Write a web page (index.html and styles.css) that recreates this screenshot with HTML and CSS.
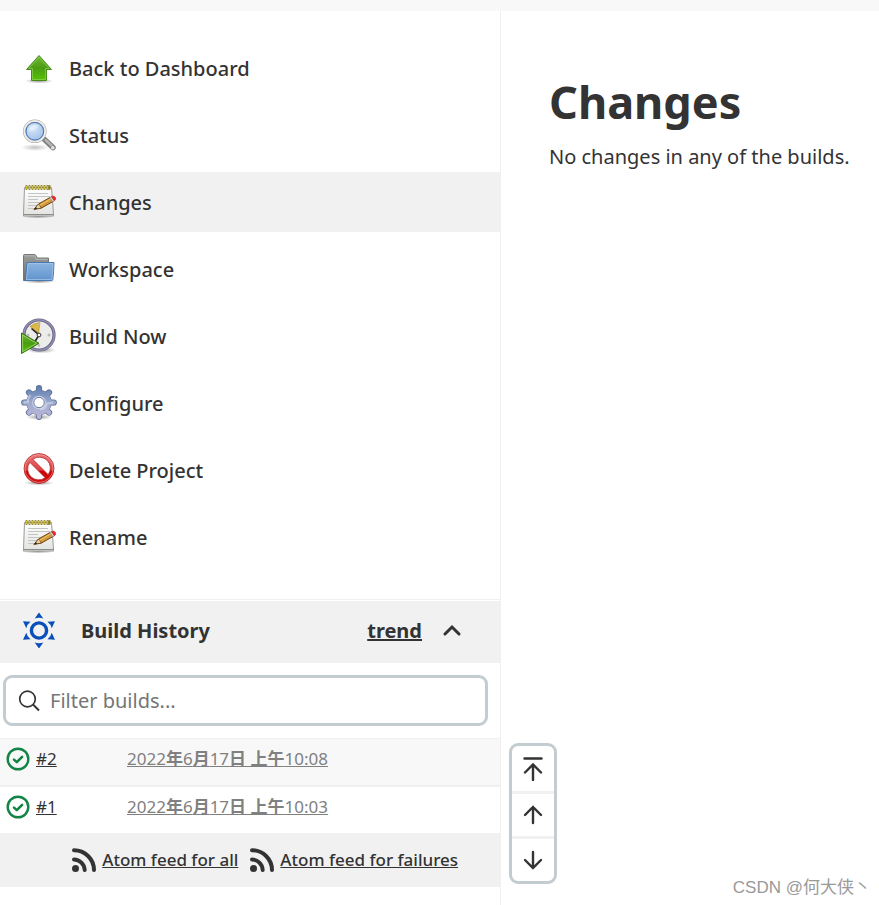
FILE: index.html
```
<!DOCTYPE html>
<html lang="en">
<head>
  <meta charset="UTF-8">
  <meta name="viewport" content="width=device-width, initial-scale=1.0">
  <title>Changes</title>
  <link rel="stylesheet" href="styles.css">
</head>
<body>
  <!-- Shared gradients and icons -->
  <svg class="defs" width="0" height="0" aria-hidden="true">
    <defs>
      <linearGradient id="green" x1="0" y1="0" x2="0" y2="1">
        <stop offset="0" stop-color="#73b83a"/>
        <stop offset="0.5" stop-color="#4a9c12"/>
        <stop offset="1" stop-color="#57c405"/>
      </linearGradient>
      <linearGradient id="blue" x1="0" y1="0" x2="0" y2="1">
        <stop offset="0" stop-color="#8cb4e0"/>
        <stop offset="1" stop-color="#5f94cd"/>
      </linearGradient>
      <radialGradient id="lens" cx="0.4" cy="0.35" r="0.7">
        <stop offset="0" stop-color="#d9e7f8"/>
        <stop offset="1" stop-color="#9abde8"/>
      </radialGradient>
      <linearGradient id="paper" x1="0" y1="0" x2="0" y2="1">
        <stop offset="0" stop-color="#ffffff"/>
        <stop offset="1" stop-color="#e2e2e0"/>
      </linearGradient>
      <linearGradient id="grey" x1="0" y1="0" x2="0" y2="1">
        <stop offset="0" stop-color="#9b9d9a"/>
        <stop offset="1" stop-color="#6c6e6b"/>
      </linearGradient>
      <linearGradient id="steel" gradientUnits="userSpaceOnUse" x1="0" y1="0" x2="0" y2="36">
        <stop offset="0" stop-color="#5878aa"/>
        <stop offset="0.5" stop-color="#9dabd0"/>
        <stop offset="1" stop-color="#c3b8d8"/>
      </linearGradient>
      <linearGradient id="red" x1="0" y1="0" x2="0" y2="1">
        <stop offset="0" stop-color="#ea7c7c"/>
        <stop offset="0.55" stop-color="#dc3f43"/>
        <stop offset="0.6" stop-color="#cc0000"/>
        <stop offset="1" stop-color="#d01818"/>
      </linearGradient>
      <radialGradient id="shadow">
        <stop offset="0" stop-color="#000" stop-opacity="0.4"/>
        <stop offset="1" stop-color="#000" stop-opacity="0"/>
      </radialGradient>
      <symbol id="notepad" viewBox="0 0 36 36">
        <ellipse cx="17" cy="32.5" rx="16" ry="2" fill="url(#shadow)"/>
        <path d="M3.500 3.500h27L32.500 30v2H2.500v-2z" fill="url(#paper)" stroke="#9b9d99"/>
        <path d="M3 30.500h29" stroke="#8b8d89" fill="none"/>
        <path d="M7 9.500h20M7 12.500h22M7 15.500h10M7 18.500h14M7 21.500h9M7 24.500h6" stroke="#c4c5c3" fill="none"/>
        <path d="M5.500 2v3M8.500 2v3M11.500 2v3M14.500 2v3M17.500 2v3M20.500 2v3M23.500 2v3M26.500 2v3M28.500 2v3" stroke="#8f8222" stroke-width="2.200" stroke-linecap="round"/>
        <path d="M5.500 2v3M8.500 2v3M11.500 2v3M14.500 2v3M17.500 2v3M20.500 2v3M23.500 2v3M26.500 2v3" stroke="#cdbd45" stroke-width="1.200"/>
        <path d="M13 25.300l4.500-5.300L29 13.500l3.500 3.700-12 6.800z" fill="#d59a3a" stroke="#6b4312" stroke-width="1"/>
        <path d="M13 25.300l4.500-5.300 3 4z" fill="#ecd3a4" stroke="#6b4312" stroke-width="0.800"/>
        <path d="M13 25.300l2-2.300 1.200 1.700z" fill="#2e2517"/>
        <path d="M18.500 21.300L30 14.700" stroke="#f0c777"/>
        <path d="M28.500 13.800l2-1.200 3.300 3.900-2 1.200z" fill="#d3d7cf" stroke="#777" stroke-width="0.600"/>
        <path d="M30.500 12.600c2.500-1.400 5.200.9 3.700 3.300l-1 .7z" fill="#ef2929" stroke="#c02020" stroke-width="0.700"/>
      </symbol>
      <symbol id="feed" viewBox="0 0 24 24">
        <circle cx="3.500" cy="20.500" r="3.500" fill="currentColor"/>
        <path d="M2 11.500A11 11 0 0 1 12.700 22M2 2.200A20 20 0 0 1 22 22" fill="none" stroke="currentColor" stroke-width="4" stroke-linecap="round"/>
      </symbol>
      <symbol id="success" viewBox="0 0 24 24">
        <circle cx="12" cy="12" r="10.300" fill="none" stroke="#138347" stroke-width="2.400"/>
        <path d="M8 12.600l2.800 2.500 5.300-5.300" fill="none" stroke="#138347" stroke-width="2.600" stroke-linecap="round" stroke-linejoin="round"/>
      </symbol>
    </defs>
  </svg>

  <div class="breadcrumb-bar"></div>
  <div class="page-body">
    <div class="side-panel">
      <nav class="tasks">
        <a class="task" href="#">
          <svg class="task__icon" viewBox="0 0 36 36" aria-hidden="true">
            <ellipse cx="18" cy="31" rx="14" ry="2.500" fill="url(#shadow)"/>
            <path d="M18 5.500L30.500 19.500h-5v11h-15v-11h-5z" fill="url(#green)" stroke="#4a8a1c"/>
            <path d="M18 7.200L28.200 18.500h-3.700v11h-13v-11H7.800z" fill="none" stroke="#8fd257" stroke-opacity="0.700"/>
          </svg>
          <span>Back to Dashboard</span>
        </a>
        <a class="task" href="#">
          <svg class="task__icon" viewBox="0 0 36 36" aria-hidden="true">
            <ellipse cx="14" cy="30.500" rx="14" ry="3.500" fill="url(#shadow)" opacity="0.600"/>
            <path d="M23.500 22.500l8.500 8" stroke="#7f817e" stroke-width="5.500" stroke-linecap="round"/>
            <path d="M24 22.500l7 6.500" stroke="#b4b6b3" stroke-width="2.500"/>
            <circle cx="31.800" cy="30.700" r="1.800" fill="#e4e4e2"/>
            <circle cx="13.800" cy="14.300" r="10.300" fill="url(#lens)" stroke="#a0a2a0" stroke-width="3"/>
            <circle cx="13.800" cy="14.300" r="10.400" fill="none" stroke="#eeeeec" stroke-width="1.800"/>
            <circle cx="13.800" cy="14.300" r="8.800" fill="none" stroke="#4876b5" stroke-width="1"/>
            <path d="M7.500 14a6.500 6.500 0 0 1 10-5.200c-2 4.500-5.500 5-10 5.200z" fill="#fff" opacity="0.400"/>
          </svg>
          <span>Status</span>
        </a>
        <a class="task task--active" href="#">
          <svg class="task__icon" aria-hidden="true"><use href="#notepad"/></svg>
          <span>Changes</span>
        </a>
        <a class="task" href="#">
          <svg class="task__icon" viewBox="0 0 36 36" aria-hidden="true">
            <ellipse cx="18" cy="30.500" rx="17" ry="1.800" fill="url(#shadow)"/>
            <path d="M2.500 29.500V4.500q0-1 1-1h10q1 0 1.400 1l1.200 2.500h11.400v6L10 29.500z" fill="url(#grey)" stroke="#757774"/>
            <path d="M3.500 4.800h10l1.800 3.500h11" fill="none" stroke="#b8bab7"/>
            <path d="M6 11.500h27q-.2 9-1.200 17-.1 1-1.100 1H3.500q1-1 1.200-3z" fill="url(#blue)" stroke="#4a78b0"/>
            <path d="M7 12.500h25q-.3 8-1.200 16H5.500z" fill="none" stroke="#a8c7e8" stroke-opacity="0.700"/>
          </svg>
          <span>Workspace</span>
        </a>
        <a class="task" href="#">
          <svg class="task__icon" viewBox="0 0 36 36" aria-hidden="true">
            <ellipse cx="20" cy="32" rx="15" ry="3.500" fill="url(#shadow)"/>
            <circle cx="18" cy="17" r="15" fill="#ececea" stroke="#6c698c" stroke-width="3.200"/>
            <circle cx="18" cy="17" r="15.200" fill="none" stroke="#9592b2" stroke-width="1.200"/>
            <path d="M9 8.500q4-3.500 10-4l-1.500 10.500z" fill="#dcb846" stroke="#a98d2c" stroke-width="0.600"/>
            <g fill="#b7b9b5"><circle cx="18" cy="6" r="1"/><circle cx="28" cy="17" r="1.500"/><circle cx="18" cy="27.500" r="1.200"/><circle cx="7" cy="17" r="1.500"/></g>
            <path d="M10.500 10.500l7.500 6.500-4 6.500" fill="none" stroke="#222" stroke-width="1.600"/>
            <circle cx="18" cy="17" r="1.900" fill="#fff" stroke="#333"/>
            <path d="M0.500 15L18 25.300L0.500 35.500z" fill="url(#green)" stroke="#37720c"/>
            <path d="M1.600 17L15.700 25.300L1.600 33.600z" fill="none" stroke="#a3da78" stroke-opacity="0.800"/>
          </svg>
          <span>Build Now</span>
        </a>
        <a class="task" href="#">
          <svg class="task__icon" viewBox="0 0 36 36" aria-hidden="true">
            <ellipse cx="18" cy="32" rx="13" ry="3" fill="url(#shadow)"/>
            <g stroke="#5f7098" stroke-width="6.200" stroke-linecap="round">
              <path d="M18 3.200v28.600M3.200 17.500h29.600M8 7.500l20 20M28 7.500l-20 20"/>
              <circle cx="18" cy="17.500" r="9.600" fill="none"/>
            </g>
            <g stroke="url(#steel)" stroke-width="4.600" stroke-linecap="round">
              <path d="M18.010 3.200L18 31.800M3.200 17.500L32.800 17.510M8 7.500l20 20M28 7.500l-20 20"/>
              <circle cx="18" cy="17.500" r="9.300" fill="none" stroke-width="5.800"/>
            </g>
            <circle cx="18" cy="17.500" r="6" fill="#fff" stroke="#d0d6e8" stroke-width="1.600"/>
            <circle cx="18" cy="17.500" r="5.200" fill="#fff" stroke="#66779f"/>
            <path d="M19 24.500q6-.5 7-6l6-1M9.500 10q-3 3-2.500 7l-4 .5" fill="none" stroke="#e5e7f3" opacity="0.500" stroke-width="2"/>
          </svg>
          <span>Configure</span>
        </a>
        <a class="task" href="#">
          <svg class="task__icon" viewBox="0 0 36 36" aria-hidden="true">
            <ellipse cx="18" cy="31" rx="15" ry="2.500" fill="url(#shadow)"/>
            <path fill-rule="evenodd" d="M18 1.500a15 15 0 1 0 0 30a15 15 0 1 0 0-30zM11.800 7.300a11 11 0 0 1 15.400 15.400zM8.800 10.300L24.200 25.700A11 11 0 0 1 8.800 10.300z" fill="url(#red)" stroke="#b52525" stroke-width="0.800"/>
            <circle cx="18" cy="16.500" r="14" fill="none" stroke="#f4a9a9" stroke-width="0.800" opacity="0.700"/>
          </svg>
          <span>Delete Project</span>
        </a>
        <a class="task" href="#">
          <svg class="task__icon" aria-hidden="true"><use href="#notepad"/></svg>
          <span>Rename</span>
        </a>
      </nav>

      <section class="history">
        <div class="history__header">
          <svg class="history__icon" viewBox="0 0 36 36" aria-hidden="true">
            <circle cx="18" cy="18.500" r="7.600" fill="none" stroke="#0b4fba" stroke-width="3.400"/>
            <path d="M18 0.500l4.300 6q-4.300-1.500-8.600 0zM18 36.500l4.300-6q-4.300 1.500-8.600 0zM2 9.300l7.500.5q-3.500 2.600-4.200 6.500zM34 9.300l-7.500.5q3.500 2.600 4.200 6.500zM2 27.700l7.500-.5q-3.500-2.600-4.200-6.500zM34 27.700l-7.500-.5q3.500-2.600 4.200-6.500z" fill="#0b4fba"/>
          </svg>
          <h2 class="history__title">Build History</h2>
          <a class="history__trend" href="#">trend</a>
          <button class="history__collapse" type="button" aria-label="Collapse">
            <svg width="18" height="12" viewBox="0 0 18 12"><path d="M2 10l7-7 7 7" fill="none" stroke="currentColor" stroke-width="3" stroke-linecap="round"/></svg>
          </button>
        </div>

        <label class="search">
          <svg class="search__icon" viewBox="0 0 22 22" aria-hidden="true">
            <circle cx="9.500" cy="9" r="7.800" fill="none" stroke="currentColor" stroke-width="1.700"/>
            <path d="M15 14.500l6 6" stroke="currentColor" stroke-width="1.900"/>
          </svg>
          <input class="search__input" type="text" placeholder="Filter builds..." aria-label="Filter builds">
        </label>

        <div class="builds">
          <table class="builds__table">
            <tr class="build build--alt">
              <td class="build__number"><svg class="build__status" aria-hidden="true"><use href="#success"/></svg><a href="#">#2</a></td>
              <td class="build__date"><a href="#">2022<b>年</b>6<b>月</b>17<b>日 上午</b>10:08</a></td>
            </tr>
            <tr class="build">
              <td class="build__number"><svg class="build__status" aria-hidden="true"><use href="#success"/></svg><a href="#">#1</a></td>
              <td class="build__date"><a href="#">2022<b>年</b>6<b>月</b>17<b>日 上午</b>10:03</a></td>
            </tr>
          </table>

          <div class="build-nav">
            <button class="build-nav__button" type="button" aria-label="Newest builds">
              <svg width="20" height="24" viewBox="0 0 20 24"><path d="M1.500 1.500h17M10 23V8M2 15.500L10 7.500l8 8"/></svg>
            </button>
            <button class="build-nav__button" type="button" aria-label="Newer builds">
              <svg width="20" height="20" viewBox="0 0 20 20"><path d="M10 18V2M2 10L10 2l8 8"/></svg>
            </button>
            <button class="build-nav__button" type="button" aria-label="Older builds">
              <svg width="20" height="20" viewBox="0 0 20 20"><path d="M10 2v16M2 10l8 8 8-8"/></svg>
            </button>
          </div>
        </div>

        <div class="feeds">
          <a class="feed" href="#"><svg class="feed__icon" aria-hidden="true"><use href="#feed"/></svg><span>Atom feed for all</span></a>
          <a class="feed" href="#"><svg class="feed__icon" aria-hidden="true"><use href="#feed"/></svg><span>Atom feed for failures</span></a>
        </div>
      </section>
    </div>

    <main class="main-panel">
      <h1 class="main-panel__title">Changes</h1>
      <p class="main-panel__text">No changes in any of the builds.</p>
    </main>
  </div>
  <div class="watermark">CSDN @何大侠丶</div>
</body>
</html>
```

FILE: styles.css
```
* {
  box-sizing: border-box;
}

body {
  margin: 0;
  min-height: 100vh;
  display: flex;
  flex-direction: column;
  position: relative;
  font-family: "Noto Sans", "Noto Sans CJK SC", sans-serif;
  font-size: 20px;
  color: #333;
  background: #fff;
}

a {
  color: inherit;
}

button {
  padding: 0;
  border: 0;
  background: none;
  color: inherit;
}

svg {
  display: block;
  flex-shrink: 0;
}

.defs {
  position: absolute;
}

.breadcrumb-bar {
  height: 11px;
  background: #f8f8f8;
}

.page-body {
  flex: 1;
  display: flex;
}

.side-panel {
  flex: 0 0 57%;
  border-right: 1px solid #f0f0f0;
}

/* Tasks */
.tasks {
  display: flex;
  flex-direction: column;
  gap: 7px;
  padding: 27px 0 32px;
}

.task {
  display: flex;
  align-items: center;
  gap: 12px;
  height: 60px;
  padding: 0 21px;
  font-weight: 500;
  text-decoration: none;
}

.task--active {
  background: #f1f1f1;
}

.task__icon {
  width: 36px;
  height: 36px;
}

/* Build history */
.history {
  border-top: 1px solid #f0f0f0;
  padding-top: 1px;
}

.history__header {
  display: flex;
  align-items: center;
  height: 62px;
  padding: 0 39px 4px 21px;
  background: #f1f1f1;
}

.history__icon {
  width: 36px;
  height: 36px;
}

.history__title {
  flex: 1;
  margin: 0 0 0 24px;
  font-size: 20px;
  font-weight: 700;
}

.history__trend {
  margin-right: 21px;
  font-weight: 700;
}

.search {
  display: flex;
  align-items: center;
  gap: 10px;
  height: 51px;
  margin: 12px 12px 12px 3px;
  padding: 0 12px;
  border: 3px solid #c3ccd1;
  border-radius: 9px;
}

.search__icon {
  width: 22px;
  height: 22px;
}

.search__input {
  flex: 1;
  min-width: 0;
  padding: 0;
  border: 0;
  outline: 0;
  background: none;
  font: inherit;
}

.search__input::placeholder {
  color: #757575;
}

.builds {
  position: relative;
  border-top: 1px solid #f0f0f0;
}

.builds__table {
  width: 100%;
  table-layout: fixed;
  border-collapse: collapse;
  font-size: 17px;
  line-height: 24px;
}

.build--alt {
  background: #f8f8f8;
  border-bottom: 2px solid #f0f0f0;
}

.build td {
  padding: 8px 0 14px;
}

.build__number {
  width: 127px;
}

.build .build__number {
  padding-left: 6px;
}

.build__status {
  display: inline-block;
  width: 24px;
  height: 24px;
  margin-right: 6px;
  vertical-align: bottom;
}

.build__date {
  color: #808080;
}

/* Scroll controls, floating beside the build list */
.build-nav {
  position: absolute;
  top: 4px;
  left: calc(100% + 9px);
  width: 48px;
  border: 3px solid #c3ccd1;
  border-radius: 9px;
  background: #fff;
}

.build-nav__button {
  display: flex;
  align-items: center;
  justify-content: center;
  width: 100%;
  height: 45px;
}

.build-nav__button + .build-nav__button {
  border-top: 3px solid #f1f1f1;
}

.build-nav svg {
  fill: none;
  stroke: currentColor;
  stroke-width: 2.4;
  stroke-linecap: round;
}

.feeds {
  display: flex;
  justify-content: flex-end;
  gap: 12px;
  padding: 14px 42px 14px 0;
  background: #f1f1f1;
  font-size: 17px;
  line-height: 26px;
}

.feed {
  display: flex;
  align-items: center;
  gap: 6px;
  white-space: nowrap;
  font-weight: 500;
}

.feed__icon {
  width: 24px;
  height: 24px;
}

/* Main */
.main-panel {
  flex: 1;
  min-width: 0;
  padding: 60px 24px 24px 48px;
}

.main-panel__title {
  margin: 0;
  font-size: 45px;
  line-height: 62px;
}

.main-panel__text {
  margin: 9px 0 0;
  line-height: 30px;
}

.watermark {
  position: absolute;
  right: 8px;
  bottom: 4px;
  font-family: "Liberation Sans", "Noto Sans CJK SC", sans-serif;
  font-size: 17px;
  line-height: 26px;
  color: #999;
}
```
